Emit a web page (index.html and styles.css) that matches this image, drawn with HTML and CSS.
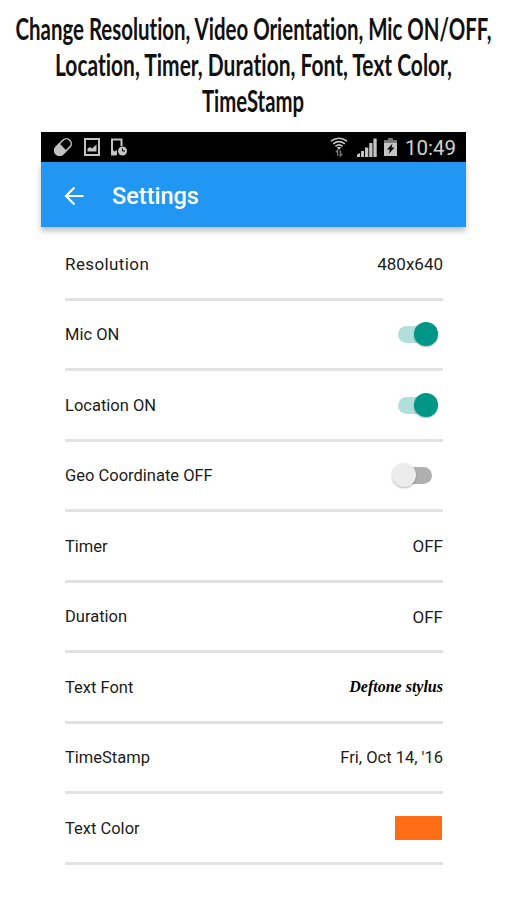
FILE: index.html
```html
<!DOCTYPE html>
<html lang="en">
<head>
    <meta charset="UTF-8">
    <meta name="viewport" content="width=device-width, initial-scale=1.0">
    <title>Settings</title>
    <link rel="stylesheet" href="styles.css">
</head>
<body>
    <!-- Headline -->
    <svg class="headline" width="506" height="132" viewBox="0 0 506 132">
        <text x="15.5" y="40" textLength="476" lengthAdjust="spacingAndGlyphs">Change Resolution, Video Orientation, Mic ON/OFF,</text>
        <text x="55" y="76.300" textLength="397" lengthAdjust="spacingAndGlyphs">Location, Timer, Duration, Font, Text Color,</text>
        <text x="202" y="112" textLength="102" lengthAdjust="spacingAndGlyphs">TimeStamp</text>
    </svg>

    <div class="phone">
        <!-- Status bar -->
        <div class="status-bar">
            <div class="status-left">
                <svg width="22" height="22" viewBox="0 0 22 22">
                    <g transform="rotate(-45 11 11)">
                        <rect x="1.5" y="6.2" width="19" height="9.600" rx="4.5" fill="none" stroke="#c4c4c4" stroke-width="1.5"/>
                        <path d="M11 5.500H6a5.500 5.500 0 0 0 0 11h5z" fill="#c4c4c4"/>
                    </g>
                </svg>
                <svg width="16" height="18" viewBox="0 0 16 18">
                    <rect x="1" y="1" width="14" height="16" fill="none" stroke="#c4c4c4" stroke-width="2"/>
                    <path d="M3.5 13.500v-3l2.500-1.500 2 1.500 4.500-4v7z" fill="#c4c4c4"/>
                </svg>
                <svg width="18" height="18" viewBox="0 0 18 18">
                    <path d="M6 16.500H2V1.500h9.500V8" fill="none" stroke="#c4c4c4" stroke-width="2"/>
                    <path d="M3 12l1.500 1.500L7 12v5H3z" fill="#c4c4c4"/>
                    <circle cx="12.500" cy="13" r="4.500" fill="#c4c4c4"/>
                    <path d="M12.500 10.500V13h2.500" fill="none" stroke="#000" stroke-width="1"/>
                </svg>
            </div>
            <div class="status-right">
                <svg class="wifi" width="18" height="20" viewBox="0 0 20 22">
                    <g fill="none" stroke="#c4c4c4" stroke-width="1.700">
                        <path d="M1 4.500Q10-2 19 4.500"/>
                        <path d="M3.500 7.500Q10 2.500 16.500 7.500"/>
                        <path d="M6 10.300Q10 7 14 10.300"/>
                    </g>
                    <path d="M7.500 11.500Q10 9.800 12.500 11.500L10 14z" fill="#c4c4c4"/>
                    <path d="M8.500 21v-6.500l-2 2.500M11.500 14.500V21l2-2.500" fill="none" stroke="#777" stroke-width="1.500"/>
                </svg>
                <svg class="signal" width="20" height="19" viewBox="0 0 20 19">
                    <path d="M0 19v-2.500l3-1.500v4zM4 19v-6h3v6zM8 19V9.500h3.300v9.500zM12.200 19V5h3.300v14zM16.400 19V0.500h3.300V19z" fill="#c4c4c4"/>
                </svg>
                <svg class="battery" width="13" height="18" viewBox="0 0 13 18">
                    <path d="M4 2V0h5v2h4v2.500H0V2z" fill="#777"/>
                    <path d="M0 4.500h13V18H0z" fill="#c4c4c4"/>
                    <path d="M8.500 5.500L3 11.500h3l-1.500 4.500 6-6.500H7.500z" fill="#000"/>
                </svg>
                <span class="clock">10:49</span>
            </div>
        </div>

        <!-- App bar -->
        <div class="app-bar">
            <svg width="20" height="20" viewBox="0 0 20 20">
                <path d="M19.500 10H2M10.500 1.500L2 10l8.500 8.500" fill="none" stroke="#fff" stroke-width="2.200"/>
            </svg>
            <h1>Settings</h1>
        </div>

        <!-- Settings list -->
        <div class="settings">
            <div class="row">
                <span class="label resolution">Resolution</span>
                <span class="value">480x640</span>
            </div>
            <div class="row">
                <span class="label">Mic ON</span>
                <span class="switch on"></span>
            </div>
            <div class="row">
                <span class="label">Location ON</span>
                <span class="switch on"></span>
            </div>
            <div class="row">
                <span class="label">Geo Coordinate OFF</span>
                <span class="switch"></span>
            </div>
            <div class="row">
                <span class="label">Timer</span>
                <span class="value">OFF</span>
            </div>
            <div class="row">
                <span class="label">Duration</span>
                <span class="value">OFF</span>
            </div>
            <div class="row">
                <span class="label">Text Font</span>
                <span class="value font-sample">Deftone stylus</span>
            </div>
            <div class="row">
                <span class="label">TimeStamp</span>
                <span class="value date">Fri, Oct 14, '16</span>
            </div>
            <div class="row">
                <span class="label">Text Color</span>
                <span class="swatch"></span>
            </div>
        </div>
    </div>
</body>
</html>
```

FILE: styles.css
```css
* {
    margin: 0;
    padding: 0;
    box-sizing: border-box;
}

body {
    width: 506px;
    height: 900px;
    background-color: #fff;
    font-family: Roboto, sans-serif;
    color: #1c1c1c;
    overflow: hidden;
}

.headline {
    display: block;
    overflow: visible;
    font-family: Lato, sans-serif;
    font-size: 30.5px;
    font-weight: 700;
    font-variant-ligatures: none;
    fill: #111;
}

.phone {
    width: 425px;
    margin-left: 41px;
}

/* Status bar */
.status-bar {
    display: flex;
    justify-content: space-between;
    align-items: center;
    height: 30px;
    padding: 0 10px 0 11px;
    background-color: #000;
}

.status-left,
.status-right {
    display: flex;
    align-items: center;
}

.status-left {
    gap: 10px;
}

.signal {
    margin-left: 9px;
}

.battery {
    margin-left: 7px;
}

.clock {
    margin-left: 8px;
    padding-top: 2px;
    font-size: 20.5px;
    line-height: 28px;
    color: #d0d0d0;
}

/* App bar */
.app-bar {
    display: flex;
    align-items: center;
    height: 65px;
    padding: 2px 0 0 23px;
    gap: 28px;
    background-color: #2196f3;
    box-shadow: 0 4px 6px rgba(0, 0, 0, 0.25);
}

.app-bar h1 {
    font-size: 23.5px;
    font-weight: 500;
    color: #fff;
}

/* Settings list */
.settings {
    padding: 3px 23px 0 24px;
}

.row {
    display: flex;
    justify-content: space-between;
    align-items: center;
    height: 70.5px;
    padding-top: 1px;
    border-bottom: 3px solid #e2e2e2;
}

.label,
.value {
    font-size: 16.5px;
    white-space: nowrap;
}

.label.resolution {
    font-size: 17px;
    letter-spacing: 0.4px;
}

.value {
    font-size: 17px;
}

.value.date {
    font-size: 16.5px;
}

.switch {
    position: relative;
    width: 33px;
    height: 17px;
    margin-right: 11px;
    border-radius: 9px;
    background-color: #b0b0b0;
}

.switch::after {
    content: "";
    position: absolute;
    top: -4px;
    left: -7px;
    width: 24px;
    height: 24px;
    border-radius: 50%;
    background-color: #ececec;
    box-shadow: 0 1px 2px rgba(0, 0, 0, 0.3);
}

.switch.on {
    margin-right: 12px;
    background-color: #b2dfdb;
}

.switch.on::after {
    left: 16px;
    background-color: #009688;
}

.value.font-sample {
    font-family: "Liberation Serif", serif;
    font-size: 16px;
    font-style: italic;
    font-weight: 700;
    color: #000;
}

.swatch {
    width: 47px;
    height: 24px;
    margin-right: 1px;
    background-color: #ff6d14;
}
```
